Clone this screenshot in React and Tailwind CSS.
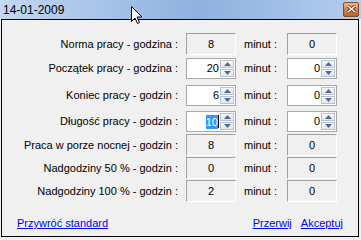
import React from "react";

function Ro({ v }) {
  return (
    <div className="w-[50px] h-[22px] flex items-center justify-center bg-[#f0f0f0] border-t border-l border-t-[#a0a0a0] border-l-[#a0a0a0] border-b border-r border-b-white border-r-white text-[11px] text-black">
      {v}
    </div>
  );
}

function Arrow({ up }) {
  return (
    <svg width="7" height="4" viewBox="0 0 7 4">
      {up ? (
        <path d="M0 4 L3.5 0 L7 4 Z" fill="#4d6a9a" />
      ) : (
        <path d="M0 0 L3.5 4 L7 0 Z" fill="#4d6a9a" />
      )}
    </svg>
  );
}

function Spin({ v, sel }) {
  return (
    <div className="w-[50px] h-[21px] flex bg-white border border-[#a9a9a9]">
      <div className="flex-1 flex items-center justify-end pr-[1px] text-[11px] text-black">
        {sel ? (
          <>
            <span className="bg-[#3399ff] text-white leading-[14px]">{v}</span>
            <span className="w-[1px] h-[13px] bg-black"></span>
          </>
        ) : (
          v
        )}
      </div>
      <div className="w-[15px] flex flex-col gap-[1px] py-[1px] pr-[1px]">
        <div className="h-[9px] flex items-center justify-center border border-[#b8c2d0] bg-gradient-to-b from-[#f8f8f8] to-[#e2e6ec]">
          <Arrow up />
        </div>
        <div className="h-[9px] flex items-center justify-center border border-[#b8c2d0] bg-gradient-to-b from-[#f8f8f8] to-[#e2e6ec]">
          <Arrow />
        </div>
      </div>
    </div>
  );
}

function Row({ label, left, right, mt }) {
  return (
    <div className={`flex items-center ${mt}`}>
      <div className="w-[176px] text-right text-[11px] text-black whitespace-nowrap">{label}</div>
      <div className="w-[8px]"></div>
      {left}
      <div className="w-[51px] pl-[8px] text-[11px] text-black">minut :</div>
      {right}
    </div>
  );
}

export default function App() {
  return (
    <div className="w-[361px] h-[240px] bg-[#f0f0f0] relative overflow-hidden font-['Liberation_Sans',Arial,sans-serif]">
      <div className="h-[19px] flex items-center justify-between bg-[linear-gradient(90deg,#c4d8f1_0%,#a9c5ea_25%,#8fb1de_55%,#a2c0e7_80%,#b4cdee_100%)]">
        <span className="pl-[3px] text-[12px] text-black">14-01-2009</span>
        <div className="mr-[2px] mt-[-1px] w-[16px] h-[15px] rounded-[2px] border border-[#8b4a22] bg-gradient-to-b from-[#f0b88c] via-[#d9824a] to-[#c2622a] flex items-center justify-center">
          <svg width="9" height="8" viewBox="0 0 9 8">
            <path d="M1 1 L8 7 M8 1 L1 7" stroke="#5a2a10" strokeWidth="3" />
            <path d="M1 1 L8 7 M8 1 L1 7" stroke="#ffffff" strokeWidth="1.6" />
          </svg>
        </div>
      </div>
      <div className="ml-[1px] w-[358px] h-[218px] border border-black bg-[#f0f0f0] flex flex-col">
        <Row mt="mt-[13px]" label="Norma pracy - godzina :" left={<Ro v="8" />} right={<Ro v="0" />} />
        <Row mt="mt-[3px]" label="Początek pracy - godzina :" left={<Spin v="20" />} right={<Spin v="0" />} />
        <Row mt="mt-[6px]" label="Koniec pracy - godzin :" left={<Spin v="6" />} right={<Spin v="0" />} />
        <Row mt="mt-[5px]" label="Długość pracy - godzin :" left={<Spin v="10" sel />} right={<Spin v="0" />} />
        <Row mt="mt-[2px]" label="Praca w porze nocnej - godzin :" left={<Ro v="8" />} right={<Ro v="0" />} />
        <Row mt="mt-[1px]" label="Nadgodziny 50 % - godzin :" left={<Ro v="0" />} right={<Ro v="0" />} />
        <Row mt="mt-[1px]" label="Nadgodziny 100 % - godzin :" left={<Ro v="2" />} right={<Ro v="0" />} />
        <div className="mt-[13px] flex items-center text-[11px]">
          <span className="ml-[15px] text-[#0000ff] underline">Przywróć standard</span>
          <span className="ml-auto text-[#0000ff] underline">Przerwij</span>
          <span className="ml-[9px] mr-[15px] text-[#0000ff] underline">Akceptuj</span>
        </div>
      </div>
      <svg className="absolute left-[131px] top-[6px]" width="12" height="19" viewBox="0 0 12 19">
        <path d="M0.5 0.5 L0.5 15.5 L4 12 L6.5 17.5 L8.5 16.5 L6 11 L11 11 Z" fill="#fff" stroke="#000" strokeWidth="1" />
      </svg>
    </div>
  );
}
